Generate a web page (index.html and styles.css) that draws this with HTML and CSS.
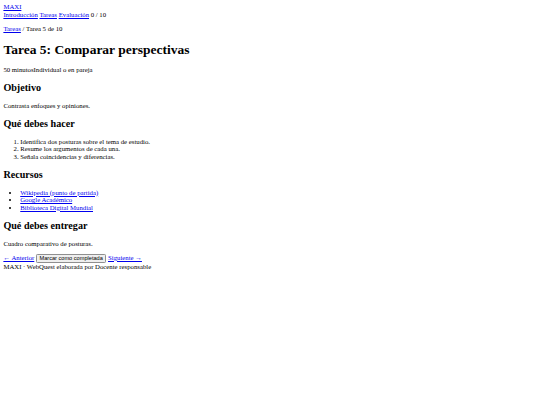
FILE: index.html
```html
<!DOCTYPE html>
<html lang="es">
<head>
<meta charset="utf-8">
<title>Tarea 5: Comparar perspectivas</title>
<link rel="stylesheet" href="styles.css">
</head>
<body class="page">
<header class="site-header">
<a href="#" class="brand">MAXI</a>
<nav class="main-nav"><a href="#">Introducción</a> <a href="#">Tareas</a> <a href="#">Evaluación</a> <span class="progress">0 / 10</span></nav>
</header>
<main class="content">
<p class="crumbs"><a href="#">Tareas</a> / Tarea 5 de 10</p>
<h1 class="title">Tarea 5: Comparar perspectivas</h1>
<p class="meta"><span>50 minutos</span><span>Individual o en pareja</span></p>
<h2 class="section-title">Objetivo</h2>
<p class="text">Contrasta enfoques y opiniones.</p>
<h2 class="section-title">Qué debes hacer</h2>
<ol class="steps">
<li>Identifica dos posturas sobre el tema de estudio.</li>
<li>Resume los argumentos de cada una.</li>
<li>Señala coincidencias y diferencias.</li>
</ol>
<h2 class="section-title">Recursos</h2>
<ul class="resources">
<li><a href="#">Wikipedia (punto de partida)</a></li>
<li><a href="#">Google Académico</a></li>
<li><a href="#">Biblioteca Digital Mundial</a></li>
</ul>
<h2 class="section-title">Qué debes entregar</h2>
<p class="text">Cuadro comparativo de posturas.</p>
<div class="pager"><a href="#">← Anterior</a> <button class="complete" type="button">Marcar como completada</button> <a href="#">Siguiente →</a></div>
</main>
<footer class="site-footer">MAXI · WebQuest elaborada por Docente responsable</footer>
</body>
</html>
```
FILE: styles.css
```css
html { background: #fff; }
.page {
  margin: 3.375px;
  font-family: "Liberation Serif", "Times New Roman", serif;
  font-size: 6.75px;
  line-height: 1.125;
  color: #000;
}
a { color: #0000ee; text-decoration: underline; }
.site-header, .main-nav { display: block; }
.brand { display: inline; }
.content { display: block; }
.crumbs, .meta, .text { margin: 1em 0; }
.title { font-size: 2em; font-weight: bold; margin: 0.67em 0; }
.section-title { font-size: 1.5em; font-weight: bold; margin: 0.83em 0; }
.steps, .resources { margin: 1em 0; padding-left: 16.875px; }
.steps { list-style: decimal; }
.resources { list-style: disc; }
.complete {
  font-family: "Liberation Sans", Arial, sans-serif;
  font-size: 5.625px;
  line-height: 1.15;
  padding: 0.42px 2.53px;
  background: #efefef;
  border: 0.84px solid #8f8f8f;
  border-radius: 1.3px;
  color: #000;
  margin: 0;
}
.site-footer { display: block; }
```
